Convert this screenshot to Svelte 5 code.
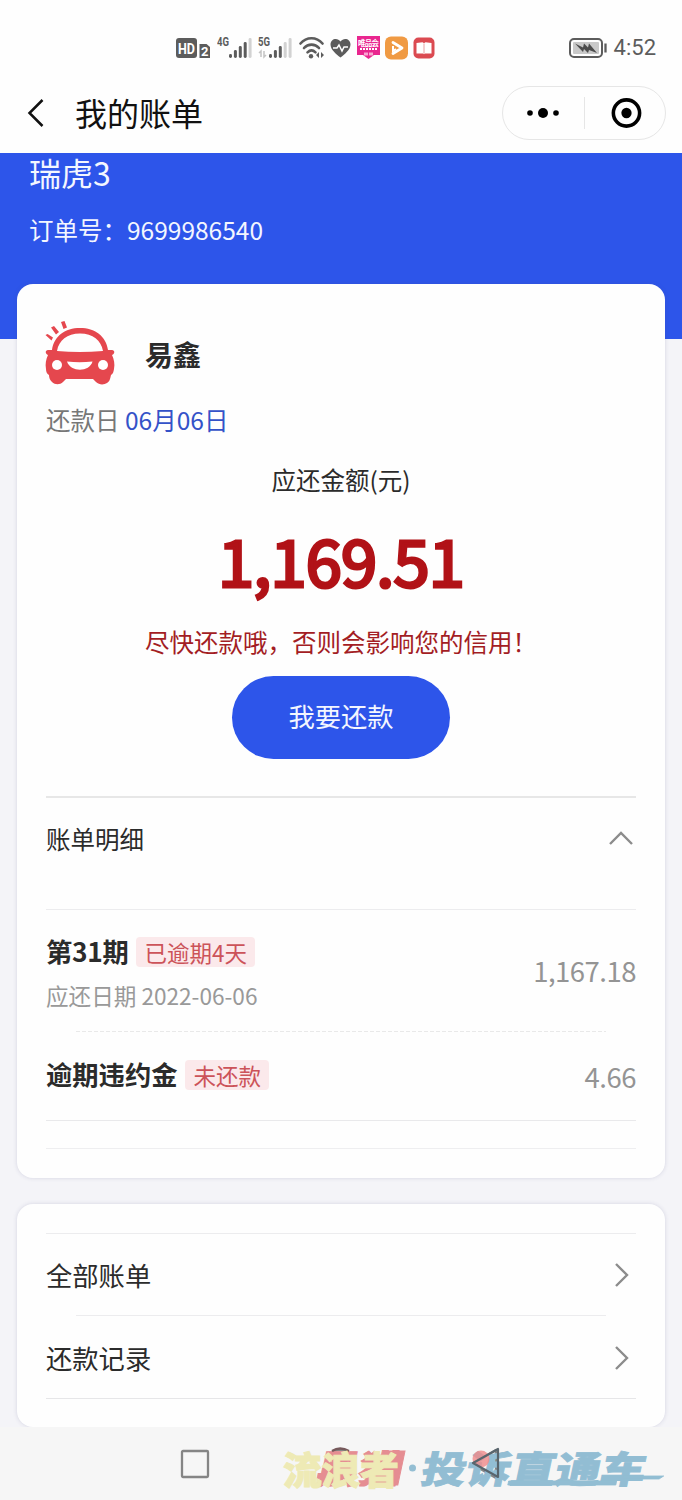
<script lang="ts">
  const orderNo = '9699986540';
  const signalBars = [4, 8, 12, 16, 20];

  const details = [
    { title: '第31期', tag: '已逾期4天', due: '应还日期 2022-06-06', amount: '1,167.18' },
    { title: '逾期违约金', tag: '未还款', due: '', amount: '4.66' }
  ];

  const links = ['全部账单', '还款记录'];
</script>

<div class="screen">
  <div class="status">
    <div class="status-icons">
      <svg class="hd" width="35" height="24" viewBox="0 0 35 24">
        <rect x="0" y="2" width="21" height="20" rx="3" fill="#5c5c5c" />
        <text x="10.5" y="17.5" font-size="15" font-weight="700" fill="#fff" text-anchor="middle" textLength="17" lengthAdjust="spacingAndGlyphs">HD</text>
        <path d="M23.500 8h7l3.500 3v11H23.500z" fill="#5c5c5c" />
        <text x="28.700" y="20" font-size="13" font-weight="700" fill="#fff" text-anchor="middle">2</text>
      </svg>
      {#each ['4G', '5G'] as net, n}
        <svg class="net{n}" width="36" height="24" viewBox="0 0 36 24">
          <text x="0" y="10" font-size="12" font-weight="700" fill="#5c5c5c" textLength="12" lengthAdjust="spacingAndGlyphs">{net}</text>
          {#each signalBars as h, i}
            <rect x={(n ? 11 : 12) + i * 4.9} y={22 - h} width="3" height={h} rx="1.4" fill={i > 3 - n ? '#d2d2d2' : '#5c5c5c'} />
          {/each}
          {#if n}
            <path d="M3 21v-6l-2 2M6 15v6l2-2" fill="none" stroke="#c4c4c4" stroke-width="1.5" />
          {/if}
        </svg>
      {/each}
      <svg class="wifi" width="26" height="24" viewBox="0 0 26 24">
        <g fill="none" stroke="#5c5c5c" stroke-width="2.6" stroke-linecap="round">
          <path d="M1.500 7.500c6-7 16-7 22 0" />
          <path d="M5 12c4-4.500 11-4.500 15 0" />
          <path d="M8.500 16.300c2.500-2.500 5.500-2.500 8 0" />
        </g>
        <circle cx="12" cy="20.300" r="2.200" fill="#5c5c5c" />
        <path d="M20 16v6l-3-3zM22 16v6l3-3z" fill="#5c5c5c" />
      </svg>
      <svg class="heart" width="21" height="24" viewBox="0 0 21 24">
        <path d="M10.500 21.500C6 18 .5 13.500.5 8.500c0-6 7-7.500 10-3 3-4.500 10-3 10 3 0 5-5.500 9.500-10 13z" fill="#5c5c5c" />
        <path d="M3 12h4l2-3 3 6 2-4h4" fill="none" stroke="#fff" stroke-width="1.500" />
      </svg>
      <svg class="shop" width="23" height="24" viewBox="0 0 23 24">
        <path d="M0 0h23v19h-6l-5.500 4-5.500-4H0z" fill="#e9268f" />
        <text x="11.500" y="9.500" font-size="7.500" font-weight="700" fill="#fff" text-anchor="middle" textLength="21">唯品会</text>
        <path d="M3 13h17" stroke="#fff" stroke-width="2" stroke-dasharray="2 1" />
        <path d="M7 18h9" stroke="#f9a6d2" stroke-width="3" stroke-dasharray="4 1" />
      </svg>
      <svg class="play" width="23" height="24" viewBox="0 0 23 24">
        <rect y=".5" width="23" height="23" rx="6" fill="#f09a43" />
        <path d="M8 6.500l9 5.500-9 5.500" fill="none" stroke="#fff" stroke-width="2.800" stroke-linejoin="round" stroke-linecap="round" />
        <path d="M8 10v5l3-2" fill="none" stroke="#fff" stroke-width="2" />
      </svg>
      <svg class="book" width="22" height="24" viewBox="0 0 22 24">
        <rect x=".5" y="1.500" width="21" height="21" rx="5" fill="#db4a51" />
        <path d="M3.500 7l6-.8 1.500 1 1.500-1 6 .8v10.500h-6.700l-.8.800-.8-.8H3.500z" fill="#fff" />
        <path d="M11 7.500v10" stroke="#e8a0a3" />
      </svg>
    </div>
    <div class="clock">
      <svg width="38" height="20" viewBox="0 0 38 20">
        <rect x="1" y="1" width="32" height="18" rx="4" fill="#fff" stroke="#5c5c5c" stroke-width="2" />
        <rect x="4" y="4" width="26" height="12" rx="1" fill="#c9c9c9" />
        <path d="M6 5.500l8 4 1-4 4 4 1-4 8 9.500-8-3-1 3-4-4-1 3z" fill="#4c4c4c" />
        <path d="M36.500 5.500v9" stroke="#5c5c5c" stroke-width="2.300" />
      </svg>
      <span>4:52</span>
    </div>
  </div>

  <header>
    <svg class="back" width="18" height="30" viewBox="0 0 18 30">
      <path d="M15.500 2L2.500 15l13 13" fill="none" stroke="#111" stroke-width="2.500" />
    </svg>
    <h1>我的账单</h1>
    <div class="capsule">
      <svg width="81" height="52" viewBox="0 0 81 52">
        <circle cx="27" cy="26" r="2.800" />
        <circle cx="40" cy="26" r="5" />
        <circle cx="53" cy="26" r="2.800" />
      </svg>
      <svg class="close" width="81" height="32" viewBox="0 0 81 32">
        <circle cx="42" cy="16" r="13.300" fill="none" stroke="#000" stroke-width="3.600" />
        <circle cx="42" cy="16" r="5.200" />
      </svg>
    </div>
  </header>

  <div class="banner">
    <div class="product">瑞虎3</div>
    <div class="order">订单号：{orderNo}</div>
  </div>

  <main>
    <section class="card bill">
      <div class="brand">
        <svg width="72" height="68" viewBox="0 0 72 68">
          <g fill="#e5474e">
            <path fill-rule="evenodd" d="M8 29C10 15 21 7 36 7s26 8 28 22h4c3 0 3 4 0 5 2 4 3 9 2 14-.5 3-1 5-3 6-1 4-1 6-4 8-3 2-8 2-11-1l-3-3H22l-3 3c-3 3-8 3-11 0-2-2-3-4-3-7-2-1-3-3-3-6-1-5 0-10 2-14-3-1-3-5 0-5zM13 30q22.500 2 46 0C57 19 49 12.500 36 12.500S15 19 13 30z" />
            <path d="M1.500 14l2-1 5.500 3.500-1.500 3zM7 6.500l3-1.500 5 6-3 2.500zM17 1l3.500-1L23 6.500 19.500 8z" />
          </g>
          <circle cx="13" cy="44" r="5" fill="#fff" />
          <circle cx="59" cy="44" r="5" fill="#fff" />
          <path d="M23 40.500q12.500 1.500 25.500 0c-3 11-22 11-25.500 0z" fill="#fff" />
        </svg>
        <strong>易鑫</strong>
      </div>
      <div class="repay-day">还款日 <span>06月06日</span></div>
      <div class="amount-label">应还金额(元)</div>
      <div class="amount">1,169.51</div>
      <div class="warning">尽快还款哦，否则会影响您的信用！</div>
      <button>我要还款</button>

      <div class="detail-head">
        <span>账单明细</span>
        <svg width="26" height="16" viewBox="0 0 26 16">
          <path d="M2 14L13 3l11 11" fill="none" stroke="#8c8c8c" stroke-width="2.400" />
        </svg>
      </div>
      {#each details as item}
        <div class="detail" class:short={!item.due}>
          <div>
            <div class="detail-title">
              <strong>{item.title}</strong>
              <span class="tag">{item.tag}</span>
            </div>
            {#if item.due}
              <div class="due">{item.due}</div>
            {/if}
          </div>
          <span class="price">{item.amount}</span>
        </div>
      {/each}
      <div class="spacer"></div>
    </section>

    <section class="card menu">
      {#each links as link}
        <div class="link">
          <span>{link}</span>
          <svg width="16" height="26" viewBox="0 0 16 26">
            <path d="M2 2l11 11L2 24" fill="none" stroke="#8c8c8c" stroke-width="2.400" />
          </svg>
        </div>
      {/each}
    </section>
  </main>

  <nav>
    <svg width="30" height="30" viewBox="0 0 30 30">
      <rect x="2" y="2" width="26" height="26" rx="1" />
    </svg>
    <svg width="32" height="32" viewBox="0 0 32 32">
      <circle cx="16" cy="16" r="14" />
    </svg>
    <svg width="30" height="32" viewBox="0 0 30 32">
      <path d="M26 2v28L2 16z" stroke-linejoin="round" />
    </svg>
    <svg class="watermark" width="412" height="60" viewBox="270 1440 412 60">
      <g transform="translate(0 1484) skewX(-12)" font-weight="900">
        <g class="red">
          <text x="314" y="-1" font-size="38" textLength="84" lengthAdjust="spacingAndGlyphs">黑猫</text>
          <path d="M378-33h20V1h-20z" />
        </g>
        <g class="blue">
          <text x="419" y="-1" font-size="37" textLength="224" lengthAdjust="spacingAndGlyphs">投诉直通车</text>
          <path d="M508-3h108v4H508zM622-8h40l-4 3h-36z" />
        </g>
      </g>
      <path d="M332 1451q8-5 17 0" fill="none" stroke="#76595b" stroke-width="2.300" />
      <circle cx="412.500" cy="1468" r="3.500" fill="#94bed3" />
      <circle cx="481" cy="1459" r="8.500" fill="#f08a8a" opacity=".8" />
      <path d="M498 1449v28l-25-14z" fill="none" stroke="#59656d" stroke-width="2.200" stroke-linejoin="round" />
      <text class="yellow" x="283" y="1484" font-size="38" font-weight="900" textLength="116" lengthAdjust="spacingAndGlyphs">流浪者</text>
    </svg>
  </nav>
</div>

<style>
  :global(body) {
    margin: 0;
    background: #f4f4f8;
  }

  .screen {
    width: 682px;
    height: 1500px;
    display: flex;
    flex-direction: column;
    overflow: hidden;
    background: #f4f4f8;
    color: #2b2b2b;
    font-family: 'Noto Sans CJK SC', sans-serif;
  }

  .screen * {
    box-sizing: border-box;
  }

  svg {
    display: block;
    flex: none;
  }

  .status {
    height: 80px;
    padding: 15px 26px 0 176px;
    display: flex;
    align-items: center;
    justify-content: space-between;
    background: #fefefe;
  }

  .status-icons,
  .clock {
    display: flex;
    align-items: center;
  }

  .status-icons text {
    font-family: 'Roboto', 'Noto Sans CJK SC', sans-serif;
  }

  .net0 {
    margin-left: 6px;
  }

  .net1 {
    margin-left: 5px;
  }

  .wifi {
    margin-left: 5px;
  }

  .heart {
    margin-left: 5px;
  }

  .shop {
    margin-left: 6px;
  }

  .play,
  .book {
    margin-left: 5px;
  }

  .clock {
    gap: 7px;
    color: #5c5c5c;
    font: 22px/26px Roboto, sans-serif;
  }

  header {
    height: 73px;
    padding: 0 16px 7px 27px;
    display: flex;
    align-items: center;
    background: #fefefe;
  }

  h1 {
    margin: 0 0 2px 30px;
    font-size: 32px;
    line-height: 48px;
    font-weight: 400;
    color: #111;
  }

  .capsule {
    width: 164px;
    height: 54px;
    margin-left: auto;
    display: flex;
    align-items: center;
    border: 1px solid #e6e6e6;
    border-radius: 27px;
  }

  .close {
    border-left: 1px solid #e6e6e6;
  }

  .banner {
    height: 186px;
    padding: 0 29px;
    flex: none;
    background: #2d55ea;
    color: #f3f6ff;
  }

  .product {
    font-size: 32px;
    line-height: 38px;
  }

  .order {
    margin-top: 19px;
    font-size: 24.500px;
    line-height: 40px;
  }

  main {
    margin-top: -55px;
    padding: 0 17px;
    display: flex;
    flex-direction: column;
    gap: 26px;
  }

  .card {
    padding: 0 29px;
    border-radius: 16px;
    background: #fefefe;
    box-shadow: 0 0 4px rgba(70, 70, 130, 0.18);
  }

  .bill {
    height: 894px;
    display: flex;
    flex-direction: column;
  }

  .brand {
    height: 100px;
    padding-top: 37px;
    margin-left: -2px;
    display: flex;
    gap: 29px;
  }

  .brand strong {
    font-size: 28px;
    line-height: 66px;
  }

  .repay-day {
    margin-top: 16px;
    font-size: 24.500px;
    line-height: 40px;
    color: #777;
  }

  .repay-day span {
    color: #3452c8;
  }

  .amount-label {
    margin-top: 20px;
    font-size: 24.500px;
    line-height: 40px;
    text-align: center;
  }

  /* regular weight with a stroke keeps the digits narrow */
  .amount {
    height: 100px;
    margin-top: 9px;
    font-size: 65px;
    line-height: 100px;
    letter-spacing: -0.8px;
    color: #b11217;
    -webkit-text-stroke: 3.2px #b11217;
    text-align: center;
  }

  .warning {
    margin-top: 13px;
    font-size: 24.500px;
    line-height: 40px;
    color: #a31d24;
    text-align: center;
    white-space: nowrap;
  }

  button {
    width: 218px;
    height: 83px;
    margin: 14px auto 0;
    padding: 0 0 4px;
    border: 0;
    border-radius: 42px;
    background: #2d55ea;
    color: #f3f6ff;
    font-family: inherit;
    font-size: 26.300px;
  }

  .detail-head {
    height: 114px;
    margin-top: 37px;
    padding: 21px 2px 0 0;
    display: flex;
    justify-content: space-between;
    border-top: 2px solid #e7e7e7;
    border-bottom: 1px solid #ececee;
    font-size: 24.500px;
    line-height: 40px;
  }

  .detail-head svg {
    margin-top: 11px;
  }

  .detail {
    height: 122px;
    padding-top: 21px;
    display: flex;
    justify-content: space-between;
    background: repeating-linear-gradient(90deg, #e9e9e9 0 4px, transparent 4px 6px) 30px 100% / 530px 1px no-repeat;
  }

  .detail.short {
    height: 89px;
    padding-top: 22px;
    background: none;
    border-bottom: 1px solid #e9e9eb;
  }

  .detail-title {
    display: flex;
    align-items: center;
    gap: 8px;
    height: 42px;
    font-size: 26.300px;
  }

  .detail-title strong {
    line-height: 40px;
    margin-bottom: 2px;
    letter-spacing: -0.3px;
  }

  .short strong {
    letter-spacing: 0;
  }

  .tag {
    height: 30px;
    padding: 0 8px;
    border-radius: 4px;
    background: #fbe9eb;
    color: #cc5359;
    font-size: 22.500px;
    line-height: 31px;
  }

  .due {
    margin-top: 7px;
    font-size: 22.600px;
    line-height: 32px;
    color: #999;
  }

  .price {
    font-size: 27.500px;
    line-height: 40px;
    letter-spacing: -0.5px;
    margin-top: 19px;
    color: #949494;
  }

  .short .price {
    margin-top: 2px;
  }

  .spacer {
    height: 28px;
    border-bottom: 1px solid #eeeef0;
  }

  .menu {
    height: 223px;
    padding-top: 29px;
  }

  .link {
    height: 82px;
    padding-right: 6px;
    display: flex;
    align-items: center;
    justify-content: space-between;
    border-top: 1px solid #ececee;
    font-size: 26.300px;
  }

  .link span {
    margin-bottom: 1px;
  }

  .link + .link {
    height: 84px;
    padding-top: 2px;
    border-top: 0;
    border-bottom: 1px solid #e6e6e8;
    background: linear-gradient(#ececee, #ececee) 30px 0 / 530px 1px no-repeat;
  }

  nav {
    position: relative;
    height: 73px;
    margin-top: auto;
    padding: 0 182px 0 180px;
    display: flex;
    align-items: center;
    justify-content: space-between;
    background: #f6f6f6;
  }

  nav > svg:not(.watermark) {
    fill: none;
    stroke: #858585;
    stroke-width: 2.300;
  }

  .watermark {
    position: absolute;
    left: 270px;
    top: 13px;
    overflow: visible;
  }

  .red {
    fill: #e58d92;
    stroke: #e58d92;
    stroke-width: 1;
  }

  .blue {
    fill: #92bdd3;
    stroke: #92bdd3;
    stroke-width: 0.800;
  }

  .yellow {
    fill: #eeeab5;
    stroke: #eeeab5;
    stroke-width: 1;
  }
</style>
